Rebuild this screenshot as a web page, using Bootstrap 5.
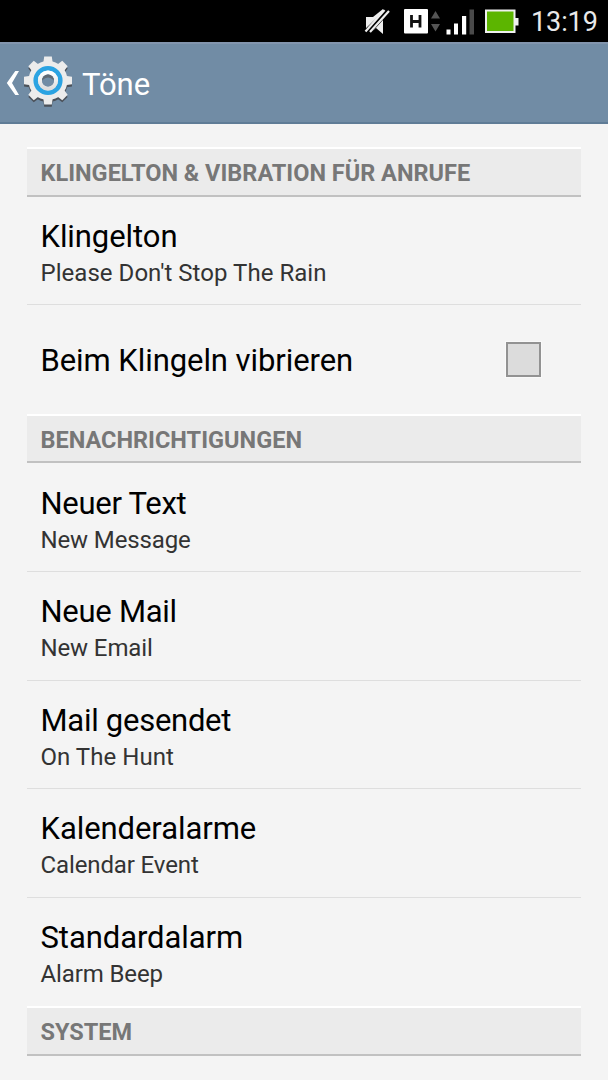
<!DOCTYPE html>
<html lang="de">
<head>
<meta charset="utf-8">
<meta name="viewport" content="width=device-width, initial-scale=1">
<title>Töne</title>
<link href="https://cdn.jsdelivr.net/npm/bootstrap@5.3.0/dist/css/bootstrap.min.css" rel="stylesheet">
<style>
body{font-family:Roboto,"Liberation Sans",sans-serif;background:#f4f4f4;height:1080px;overflow:hidden;color:#000}
.status-bar{height:42px;background:#000;color:#e9e9e9}
.clock{font-size:27px;line-height:44px;letter-spacing:-.1px;width:77px}
.action-bar{height:82px;background:#718ca5;border-top:2px solid #8295ad;border-bottom:2px solid #5f7c96;color:#fff}
.action-title{font-size:31px;line-height:36px;letter-spacing:-.05px;padding-top:3px}
.settings{padding:23px 27px 0}
.section-head{height:49.6px;border-top:2px solid #fff;border-bottom:2px solid #c1c1c1;background:#ebebeb;color:#777;font-size:23.5px;font-weight:700;line-height:48px;padding-left:13.5px;white-space:nowrap}
.setting{height:108.6px;padding:5px 40px 0 13.5px;border-bottom:1px solid #dedede}
.setting.last{border-bottom-color:transparent}
.setting-name{font-size:31px;line-height:36px;letter-spacing:-.07px;white-space:nowrap}
.tight{letter-spacing:-.27px}
.setting-value{font-size:24px;line-height:28px;margin-top:4px;letter-spacing:-.12px;color:#333;white-space:nowrap}
.setting-value.wide{letter-spacing:.04px}
.check{appearance:none;width:35px;height:35px;background:#dcdcdc;border:2px solid #929292;margin:-4px 0 0;box-shadow:0 0 0 1px #f9f9f9}
</style>
</head>
<body>
<header>
<div class="status-bar d-flex justify-content-end">
<svg width="168" height="42" viewBox="363 0 168 42">
<path d="M366 17h7l10-8v4l-16 18h-1zM373 31l10-11v14l-7-6z" fill="#eee"/>
<path d="M366 31.500L388 10.500" stroke="#000" stroke-width="5"/>
<path d="M365.500 31.500L384.500 10M370 32L389 11" stroke="#eee" stroke-width="2.200"/>
<rect x="404" y="9" width="24" height="24.500" rx="1" fill="#fff"/>
<path d="M411.500 15V27.500M420 15V27.500M411 21.500H420" stroke="#111" stroke-width="2.800" fill="none"/>
<path d="M431 18.500l4.500-7.500 4.500 7.500zM431 24h9l-4.500 7.500z" fill="#555"/>
<path d="M446.500 29.500h4v5h-4zM454 23.500h4v11h-4zM462 16h4.200v18.500H462z" fill="#fff"/><path d="M469.500 9.500h4.500v25h-4.500z" fill="#4a4a4a"/>
<path d="M485 9.500h30.500v8.500h3v7.500h-3V33H485z" fill="#f0f0f0"/><rect x="487" y="11.500" width="26.500" height="19.500" fill="#5cb500"/>
</svg>
<div class="clock">13:19</div>
</div>
<div class="action-bar d-flex align-items-center">
<svg width="82" height="78" viewBox="0 44 82 78">
<defs><linearGradient id="metal" x1="0" y1="0" x2="0" y2="1"><stop offset="0" stop-color="#fff"/><stop offset="1" stop-color="#dedede"/></linearGradient>
<g id="gear"><circle cx="48" cy="80.500" r="14.500" fill="none" stroke-width="10"/>
<g stroke="none"><path id="t" d="M43 65l1.200-8.500h7.600l1.200 8.500z"/><use href="#t" transform="rotate(45 48 80.500)"/><use href="#t" transform="rotate(90 48 80.500)"/><use href="#t" transform="rotate(135 48 80.500)"/><use href="#t" transform="rotate(180 48 80.500)"/><use href="#t" transform="rotate(225 48 80.500)"/><use href="#t" transform="rotate(270 48 80.500)"/><use href="#t" transform="rotate(315 48 80.500)"/></g></g></defs>
<path d="M15.300 71H19L12 83l7 12h-3.700L6.800 83z" fill="#fff"/>
<use href="#gear" y="2.200" fill="#4b5159" stroke="#4b5159"/>
<use href="#gear" fill="#ececec" stroke="#ececec"/>
<circle cx="48" cy="80.500" r="12.300" fill="none" stroke="#2ba3e2" stroke-width="4.600"/>
<circle cx="48" cy="80.500" r="8" fill="none" stroke="url(#metal)" stroke-width="4.200"/>
<circle cx="48" cy="80.500" r="6" fill="#718ca5"/><path d="M42 80.500a6 6 0 0 1 12 0q-6-6-12 0z" fill="#606973"/>
</svg>
<div class="action-title">Töne</div>
</div>
</header>
<main class="settings">
<div class="section-head">KLINGELTON &amp; VIBRATION FÜR ANRUFE</div>
<div class="setting d-flex flex-column justify-content-center"><div class="setting-name">Klingelton</div><div class="setting-value wide">Please Don't Stop The Rain</div></div>
<label class="setting last d-flex align-items-center justify-content-between"><span class="setting-name">Beim Klingeln vibrieren</span><input class="check" type="checkbox"></label>
<div class="section-head">BENACHRICHTIGUNGEN</div>
<div class="setting d-flex flex-column justify-content-center"><div class="setting-name tight">Neuer Text</div><div class="setting-value tight">New Message</div></div>
<div class="setting d-flex flex-column justify-content-center"><div class="setting-name tight">Neue Mail</div><div class="setting-value tight">New Email</div></div>
<div class="setting d-flex flex-column justify-content-center"><div class="setting-name tight">Mail gesendet</div><div class="setting-value wide">On The Hunt</div></div>
<div class="setting d-flex flex-column justify-content-center"><div class="setting-name">Kalenderalarme</div><div class="setting-value">Calendar Event</div></div>
<div class="setting last d-flex flex-column justify-content-center"><div class="setting-name">Standardalarm</div><div class="setting-value">Alarm Beep</div></div>
<div class="section-head">SYSTEM</div>
</main>
<script src="https://cdn.jsdelivr.net/npm/bootstrap@5.3.0/dist/js/bootstrap.bundle.min.js"></script>
</body>
</html>
